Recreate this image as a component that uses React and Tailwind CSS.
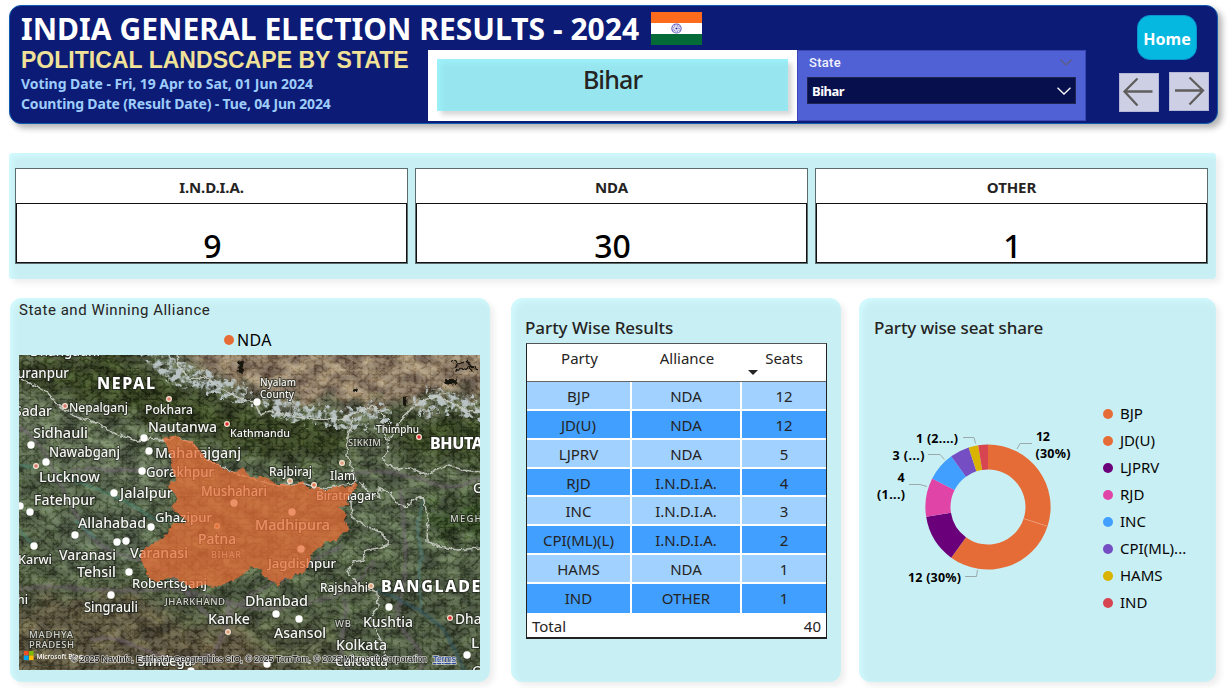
const panel =
  "bg-[#c8eff3] shadow-[inset_3px_3px_6px_#d2fbff,4px_4px_6px_rgba(0,0,0,0.07)]";

/* ---------- header ---------- */

function Flag() {
  return (
    <svg viewBox="0 0 50 33" preserveAspectRatio="none" className="h-[33px] w-[51px]">
      <rect width="50" height="11" fill="#ff6b1c" />
      <rect y="11" width="50" height="11" fill="#fff" />
      <rect y="22" width="50" height="11" fill="#046a38" />
      <circle cx="25" cy="16.5" r="4.6" fill="none" stroke="#5b55b8" strokeWidth="1" />
      <circle cx="25" cy="16.5" r="2.8" fill="none" stroke="#8f8bd0" strokeWidth="2" strokeDasharray="0.8 0.7" />
      <circle cx="25" cy="16.5" r="1.1" fill="#3a3499" />
    </svg>
  );
}

function NavButton({ d, className }) {
  return (
    <button
      className={`flex h-[39px] w-10 items-center justify-center border border-[#b3b6d6] bg-[#cdd0e5] ${className}`}
    >
      <svg viewBox="0 0 40 39" className="h-[39px] w-10 shrink-0" fill="none" stroke="#605e5c" strokeWidth="2.3">
        <path d={d} />
      </svg>
    </button>
  );
}

function Header() {
  return (
    <header className="ml-[9px] mt-[5px] flex h-[119px] w-[1209px] rounded-[12px] border border-[#0f5cae] bg-[#0c1b76] shadow-[4px_4px_6px_rgba(0,0,0,0.3)]">
      <div className="flex w-[1076px] flex-col">
        <div className="flex h-11 items-start pl-[11px]">
          <h1 className="mt-[1px] w-[621px] whitespace-nowrap text-[30px] font-bold leading-[44px] tracking-[0.03px] text-white">
            INDIA GENERAL ELECTION RESULTS - 2024
          </h1>
          <div className="ml-[9px] mt-[6px]">
            <Flag />
          </div>
        </div>
        <div className="flex h-[71px]">
          <div className="w-[418px] pl-[11px]">
            <h2 className="-mt-[4px] whitespace-nowrap font-['Liberation_Sans',sans-serif] text-[23px] font-bold leading-[28px] tracking-[0.03px] text-[#f0e199]">
              POLITICAL LANDSCAPE BY STATE
            </h2>
            <p className="whitespace-nowrap text-[14px] font-bold leading-[20px] tracking-[-0.06px] text-[#9dcdfb]">
              Voting Date - Fri, 19 Apr to Sat, 01 Jun 2024
            </p>
            <p className="whitespace-nowrap text-[14px] font-bold leading-[20px] tracking-[-0.16px] text-[#9dcdfb]">
              Counting Date (Result Date) - Tue, 04 Jun 2024
            </p>
          </div>
          <div className="w-[369px] bg-white pl-[9px] pt-[9px]">
            <div className="h-[52px] w-[351px] bg-[#97e5ef] text-center text-[25px] font-medium leading-[41px] tracking-[-0.9px] text-[#252423] shadow-[inset_3px_3px_6px_#9df3fb,4px_4px_5px_rgba(0,0,0,0.16)]">
              Bihar
            </div>
          </div>
          <div className="w-[289px] border border-[#3a47b4] bg-[#4f61d5] px-[9px] text-white">
            <div className="flex h-[26px] items-center justify-between pl-[2px] pr-[3px] font-['Roboto',sans-serif] text-[13px] font-medium tracking-[0.3px] text-[#f1f2fc]">
              <span className="-mt-[2px]">State</span>
              <svg viewBox="0 0 12 7" className="-mt-[3px] mr-px h-[7px] w-3" fill="none" stroke="#605e7c" strokeWidth="1.2">
                <path d="M0.5 0.7 L6 6 L11.5 0.7" />
              </svg>
            </div>
            <div className="flex h-[27px] items-center justify-between border border-[#20264f] bg-[#080f4d] pl-1 pr-1">
              <span className="pt-[3px] text-[13px] font-bold tracking-[-0.5px]">Bihar</span>
              <svg viewBox="0 0 14 8" className="h-2 w-[14px]" fill="none" stroke="#fff" strokeWidth="1.3">
                <path d="M0.5 0.8 L7 7 L13.5 0.8" />
              </svg>
            </div>
          </div>
        </div>
      </div>
      <div className="flex flex-1 flex-col">
        <button className="ml-[51px] mt-[9px] h-[45px] w-[60px] rounded-[13px] border border-[#0a93cf] bg-[#05b8e0] pt-[3px] text-[16px] font-bold leading-[40px] text-white">
          Home
        </button>
        <div className="ml-[33px] mt-[12px] flex gap-[10px]">
          <NavButton className="mt-px" d="M5.5 18.5 H33.5 M18.5 5.5 L5.5 18.5 L18.5 32.5" />
          <NavButton className="" d="M6 18.5 H34 M20.5 5.5 L34 18.5 L20.5 32.5" />
        </div>
      </div>
    </header>
  );
}

/* ---------- alliance totals ---------- */

function Total({ name, seats }) {
  return (
    <div className="flex h-24 w-[393px] flex-col border border-[#5c6b6e] bg-white text-center">
      <div className="h-[34px] text-[15px] font-bold leading-[36px] tracking-[-0.1px] text-[#252423]">{name}</div>
      <div className="h-[60px] border border-[#111] pl-[2px] pt-[21px] text-[32px] font-medium leading-[42px] text-black">
        {seats}
      </div>
    </div>
  );
}

/* ---------- map ---------- */

const cityLabels = [
  ["uranpur", 17, 378, 52, 13.5],
  ["Nepalganj", 69, 412, 59, 12.5],
  ["Pokhara", 145, 414, 48, 12.5],
  ["Sadar", 14, 416, 38, 13.5],
  ["Nautanwa", 148, 432, 69, 14],
  ["Kathmandu", 230, 437, 60, 11.5],
  ["Sidhauli", 33, 438, 55, 14],
  ["Nawabganj", 49, 457, 71, 14],
  ["Maharajganj", 155, 458, 86, 14],
  ["Gorakhpur", 146, 477, 68, 14],
  ["Lucknow", 39, 482, 61, 14],
  ["Jalalpur", 120, 498, 53, 14],
  ["Fatehpur", 34, 505, 61, 14],
  ["Mushahari", 201, 496, 66, 14],
  ["Ghazipur", 155, 522, 57, 13],
  ["Allahabad", 78, 528, 68, 14],
  ["Patna", 198, 544, 38, 14],
  ["Varanasi", 59, 560, 57, 14],
  ["Varanasi", 130, 558, 58, 14],
  ["Karwi", 18, 564, 34, 13],
  ["Tehsil", 77, 577, 39, 14],
  ["Robertsganj", 132, 588, 75, 13],
  ["Singrauli", 84, 612, 54, 13.5],
  ["hi", 17, 604, 11, 13],
  ["Kanke", 208, 624, 42, 14],
  ["Dhanbad", 245, 606, 63, 14],
  ["Asansol", 274, 638, 52, 14],
  ["Kolkata", 336, 650, 51, 14],
  ["Calcutta", 335, 666, 53, 14],
  ["Simdega", 138, 666, 54, 14],
  ["Kushtia", 363, 627, 50, 13.5],
  ["Dhaka", 455, 624, 42, 14.5],
  ["La", 471, 648, 17, 13.5],
  ["C", 472, 676, 9, 13.5],
  ["G", 473, 493, 10, 13.5],
  ["Jagdishpur", 268, 568, 68, 13],
  ["Madhipura", 255, 530, 75, 14],
  ["Rajshahi", 320, 592, 48, 12.5],
  ["Biratnagar", 316, 500, 60, 12],
  ["Rajbiraj", 269, 476, 43, 12.5],
  ["Ilam", 330, 480, 25, 12.5],
  ["Thimphu", 376, 433, 43, 11.5],
  ["Nyalam", 260, 386, 36, 10.5],
  ["County", 260, 398, 34, 10.5],
  ["Dhangadhi", 30, 356, 70, 13.5],
];

const countryLabels = [
  ["NEPAL", 97, 389, 58],
  ["BHUTAN", 430, 449, 66],
  ["BANGLADESH", 381, 592, 124],
];

const regionLabels = [
  ["SIKKIM", 348, 446, 33, 9.5],
  ["BIHAR", 211, 558, 30, 9],
  ["JHARKHAND", 165, 605, 60, 9.5],
  ["MADHYA", 29, 638, 44, 9.5],
  ["PRADESH", 29, 648, 45, 9.5],
  ["WB", 335, 627, 16, 9.5],
  ["MEGHALAYA", 450, 522, 66, 9.5],
];

const whiteDots = [
  [144, 438], [149, 451], [142, 471], [114, 493], [31, 445], [46, 462], [30, 512],
  [20, 506], [75, 535], [117, 542], [126, 541], [151, 527], [34, 546], [129, 572],
  [111, 595], [234, 503], [292, 512], [301, 549], [276, 614], [299, 619],
  [389, 607], [257, 402], [467, 655], [267, 664], [191, 671],
];

const ringDots = [
  [65, 406, "#d8786c"], [169, 399, "#e08573"], [227, 424, "#dc2f2f"], [36, 466, "#d8786c"],
  [419, 437, "#dc2f2f"], [342, 463, "#dba07a"], [290, 481, "#dba07a"], [314, 485, "#e07850"],
  [371, 586, "#dba07a"], [450, 618, "#dc2f2f"], [228, 632, "#dba07a"], [217, 526, "#dc7a3a"],
];

const BIHAR =
  "M163 439 175 435 183 440 192 441 198 448 205 458 217 463 224 470 237 472 243 467 250 477 265 477 278 485 290 485 303 481 307 488 320 488 326 491 337 486 350 487 355 481 357 488 351 492 347 500 350 506 338 507 347 514 344 520 349 531 341 534 337 541 327 541 320 547 313 552 310 562 305 572 296 574 290 578 282 580 278 587 272 581 265 577 260 570 250 567 244 574 237 578 225 584 213 587 203 584 193 589 183 582 170 577 158 582 150 580 146 572 143 565 140 556 144 549 158 541 167 535 173 524 187 522 182 517 177 513 171 507 177 500 173 492 167 486 177 478 172 470 171 455Z";

function MapView() {
  return (
    <svg viewBox="19 355 461 315" className="isolate block h-[315px] w-[461px]">
      <defs>
        <filter id="soft" x="-20%" y="-20%" width="140%" height="140%">
          <feGaussianBlur stdDeviation="7" result="b" />
          <feTurbulence type="fractalNoise" baseFrequency="0.05" numOctaves="4" seed="11" result="n" />
          <feDisplacementMap in="b" in2="n" scale="36" />
        </filter>
        <filter id="haze" x="-20%" y="-20%" width="140%" height="140%">
          <feGaussianBlur stdDeviation="1.1" result="b" />
          <feTurbulence type="fractalNoise" baseFrequency="0.15" numOctaves="3" seed="2" result="n" />
          <feDisplacementMap in="b" in2="n" scale="6" />
        </filter>
        <filter id="terrain" x="0" y="0" width="100%" height="100%" colorInterpolationFilters="sRGB">
          <feTurbulence type="fractalNoise" baseFrequency="0.05 0.08" numOctaves="6" seed="8" />
          <feColorMatrix values="1.6 1.2 0 0 -0.95  1.6 1.2 0 0 -0.95  1.5 1.1 0 0 -0.88  0 0 0 0 0.34" />
        </filter>
        <filter id="ridges" x="0" y="0" width="100%" height="100%" colorInterpolationFilters="sRGB">
          <feTurbulence type="turbulence" baseFrequency="0.13 0.16" numOctaves="4" seed="21" />
          <feColorMatrix values="2.2 1.3 0 0 -0.32  2.2 1.3 0 0 -0.34  2.2 1.3 0 0 -0.36  0 0 0 0 0.4" />
        </filter>
        <filter id="snowfall" x="-10%" y="-10%" width="120%" height="120%" colorInterpolationFilters="sRGB">
          <feTurbulence type="fractalNoise" baseFrequency="0.16" numOctaves="4" seed="3" result="n" />
          <feDisplacementMap in="SourceGraphic" in2="n" scale="26" result="d" />
          <feColorMatrix in="n" values="0 0 0 0 0.72  0 0 0 0 0.76  0 0 0 0 0.76  3.4 3 0 0 -2.75" result="m" />
          <feComposite in="m" in2="d" operator="in" />
          <feGaussianBlur stdDeviation="0.5" />
        </filter>
        <filter id="rough" x="-5%" y="-5%" width="110%" height="110%">
          <feTurbulence type="fractalNoise" baseFrequency="0.22" numOctaves="2" seed="5" result="n" />
          <feDisplacementMap in="SourceGraphic" in2="n" scale="5" xChannelSelector="R" yChannelSelector="G" />
        </filter>
        <linearGradient id="land" x1="0.55" y1="0" x2="0.35" y2="1">
          <stop offset="0" stopColor="#49523a" />
          <stop offset="0.45" stopColor="#4a5a41" />
          <stop offset="0.75" stopColor="#46543a" />
          <stop offset="1" stopColor="#4b4c35" />
        </linearGradient>
      </defs>

      <rect x="19" y="355" width="461" height="315" fill="url(#land)" />
      <g filter="url(#soft)">
        <path d="M165 335 510 335 510 402 450 392 410 402 350 402 290 402 245 388 200 368Z" fill="#877560" />
        <path d="M10 360 120 352 180 385 250 408 345 425 345 458 250 458 160 425 90 405 10 375Z" fill="#2e3b1e" />
        <path d="M385 422 490 418 490 462 410 458Z" fill="#2e3c1e" />
        <path d="M10 395 100 430 160 450 170 500 90 480 10 440Z" fill="#54634b" />
        <path d="M430 502 490 502 490 540 435 535Z" fill="#2c421d" />
        <path d="M10 605 140 595 200 640 120 680 10 680Z" fill="#534d38" />
        <path d="M150 645 240 625 280 680 150 680Z" fill="#514a34" />
        <path d="M350 560 490 600 490 680 340 680Z" fill="#425038" />
        <path d="M60 505 150 500 150 560 60 570Z" fill="#4b5a45" />
      </g>
      <rect x="19" y="355" width="461" height="315" filter="url(#terrain)" className="mix-blend-overlay" />
      <rect x="19" y="355" width="461" height="315" filter="url(#ridges)" className="mix-blend-soft-light" />
      <g filter="url(#haze)" fill="none" stroke="#77677b" strokeOpacity="0.55" strokeWidth="3">
        <path d="M19 428 C50 440 60 500 90 535 S150 545 185 590 S220 620 245 600 S290 580 340 545" />
        <path d="M70 470 C110 468 140 472 172 470" />
        <path d="M19 590 C60 580 90 595 150 590 S240 620 300 605 S350 590 375 560" />
        <path d="M350 475 C380 465 420 478 440 485 S470 480 482 478" />
        <path d="M345 600 C350 630 330 650 350 670 M400 490 C405 540 410 560 400 600 S430 640 420 670" />
        <path d="M90 640 C120 630 140 655 180 660 S230 630 228 600" />
      </g>
      <g filter="url(#haze)" fill="none" stroke="#4a8f7c" strokeOpacity="0.8" strokeWidth="1.8">
        <path d="M19 465 36 468 M60 475 C100 490 125 500 140 510 S155 520 170 520" />
        <path d="M19 530 34 546 M75 520 95 538" />
      </g>
      <g filter="url(#haze)" fill="none" stroke="#547e7c" strokeOpacity="0.8" strokeWidth="2.4">
        <path d="M423 500 417 525 421 557 418 580 422 610" />
        <path d="M377 590 400 600 422 612 443 628 455 650 465 672" stroke="#2f5560" />
      </g>

      <g filter="url(#snowfall)">
        <path d="M140 355 165 352 190 366 225 378 250 388 248 402 215 396 185 388 165 380Z" fill="#fff" />
        <path d="M262 402 275 396 300 402 345 412 385 404 392 418 350 430 310 422 275 420Z" fill="#fff" />
        <path d="M412 402 440 388 480 400 480 420 445 408 420 418Z" fill="#fff" />
      </g>
      <g fill="#15130f" filter="url(#rough)">
        <path d="M237 362 243 361 242 366 244 374 237 372 240 368Z M444 379 457 379 456 385 446 383Z M403 397 407 396 406 407 403 405Z M353 388 358 389 357 392 352 391Z" />
        <path d="M452 360 458 364 464 362 M458 364 456 370 463 370 470 366 478 370 M466 360 470 366 472 372" fill="none" stroke="#15130f" strokeWidth="1.3" />
      </g>

      <g fill="none" stroke="#c9ccc4" strokeWidth="1.5" strokeLinejoin="round" strokeOpacity="0.9" filter="url(#rough)">
        <path d="M21 379 47 392 60 407 77 417 100 424 113 433 137 441 150 438 163 441 175 437 192 443 205 459 237 474 250 478 278 486 303 483 320 489 355 483" />
        <path d="M177 355 179 366 190 380 205 377 223 390 243 400 255 402 260 415 270 411 290 416 310 419 340 420 353 414 373 406 384 416 384 432 387 440 388 452 383 458 385 464 397 469 410 468 427 475 437 469 450 465 462 470 480 472" />
        <path d="M388 442 400 422 410 410 424 400 437 396 450 402 466 410 480 412" />
        <path d="M353 418 348 435 347 455 353 470 356 482 350 490 352 517 367 527 380 532 390 544 378 548 366 550 363 560 353 562 347 572 360 586 377 592 378 607 371 617 378 634 383 645 387 672" />
        <path d="M360 482 368 492 380 498 378 488 390 493 397 504 407 507 412 500 423 497 428 518 427 542 440 546 457 550 480 548" />
      </g>

      <g className="font-['Noto_Sans',sans-serif]" fill="#f4f5f2" stroke="#20241c" strokeOpacity="0.7" strokeWidth="2">
        {regionLabels.map(([t, x, y, w, s]) => (
          <text key={t} x={x} y={y} textLength={w} fontSize={s} fontWeight="500" fill="#d2d3cd" paintOrder="stroke">
            {t}
          </text>
        ))}
        {cityLabels.map(([t, x, y, w, s]) => (
          <text key={t + x} x={x} y={y} textLength={w} lengthAdjust="spacingAndGlyphs" fontSize={s} fontWeight="500" paintOrder="stroke">
            {t}
          </text>
        ))}
        {countryLabels.map(([t, x, y, w]) => (
          <text key={t} x={x} y={y} textLength={w} fontSize="16" fontWeight="800" fill="#fff" paintOrder="stroke">
            {t}
          </text>
        ))}
      </g>
      {whiteDots.map(([x, y]) => (
        <circle key={`${x}-${y}`} cx={x} cy={y} r="3.7" fill="#fff" />
      ))}
      {ringDots.map(([x, y, c]) => (
        <circle key={`${x}-${y}`} cx={x} cy={y} r="2.4" fill={c} stroke="#f6e3d2" strokeWidth="1.2" />
      ))}

      <path d={BIHAR} fill="#e66c37" fillOpacity="0.75" filter="url(#rough)" />

      <g>
        <rect x="24" y="651" width="4.6" height="4.6" fill="#f25022" />
        <rect x="29" y="651" width="4.6" height="4.6" fill="#7fba00" />
        <rect x="24" y="655.5" width="4.6" height="4.6" fill="#00a4ef" />
        <rect x="29" y="655.5" width="4.6" height="4.6" fill="#ffb900" />
        <text x="36.5" y="658.5" textLength="46" lengthAdjust="spacingAndGlyphs" fontSize="7.5" fontWeight="500" fill="#fff" className="font-['Noto_Sans',sans-serif]">
          Microsoft Bing
        </text>
      </g>
      <g className="font-['Liberation_Sans',sans-serif]" fontSize="9" fill="#000" stroke="#f0f0f0" strokeWidth="1.5" strokeOpacity="0.75">
        <text x="71" y="662" textLength="356" paintOrder="stroke">
          © 2025 NavInfo, Earthstar Geographics SIO, © 2025 TomTom, © 2025 Microsoft Corporation
        </text>
        <text x="433" y="662" textLength="23" fill="#1b3c9c" textDecoration="underline" paintOrder="stroke">
          Terms
        </text>
      </g>
    </svg>
  );
}

function MapPanel() {
  return (
    <section className={`flex h-[384px] w-[480px] flex-col rounded-[12px] pl-[9px] ${panel}`}>
      <h3 className="mt-[3px] h-[18px] font-['Roboto',sans-serif] text-[15px] leading-[18px] tracking-[0.52px] text-[#252423]">
        State and Winning Alliance
      </h3>
      <div className="mt-[7px] flex h-[29px] items-start gap-[3px] pl-[205px]">
        <span className="mt-[9px] h-[10px] w-[10px] rounded-full bg-[#e66c37]" />
        <span className="text-[16px] leading-[28px] tracking-[0.4px] text-black">NDA</span>
      </div>
      <MapView />
    </section>
  );
}

/* ---------- party table ---------- */

const results = [
  ["BJP", "NDA", 12],
  ["JD(U)", "NDA", 12],
  ["LJPRV", "NDA", 5],
  ["RJD", "I.N.D.I.A.", 4],
  ["INC", "I.N.D.I.A.", 3],
  ["CPI(ML)(L)", "I.N.D.I.A.", 2],
  ["HAMS", "NDA", 1],
  ["IND", "OTHER", 1],
];

function TablePanel() {
  return (
    <section className={`h-[384px] w-[330px] rounded-[12px] pl-[14px] pt-[17px] ${panel}`}>
      <h3 className="h-[28px] whitespace-nowrap text-[17px] font-medium leading-[26px] tracking-[-0.05px] text-[#252423]">
        Party Wise Results
      </h3>
      <div className="ml-px flex h-[296px] w-[301px] flex-col border border-b-2 border-[#222] border-t-[#555] bg-white text-[15px] text-[#252423]">
        <div className="grid h-[38px] shrink-0 grid-cols-[105px_110px_84px] border-b border-[#666] text-center leading-[29px]">
          <span>Party</span>
          <span>Alliance</span>
          <span className="relative">
            Seats
            <svg viewBox="0 0 10 5" className="absolute left-[6px] top-[26px] h-[5px] w-[10px]">
              <path d="M0 0H10L5 5Z" fill="#252423" />
            </svg>
          </span>
        </div>
        {results.map(([party, alliance, seats], i) => (
          <div
            key={party}
            className={`grid h-[28.85px] shrink-0 grid-cols-[105px_110px_84px] text-center leading-[29px] ${
              i % 2 ? "bg-[#419fff]" : "bg-[#a0d1ff]"
            } ${i < 7 ? "border-b-2 border-white" : ""}`}
          >
            <span className="border-r-2 border-white">{party}</span>
            <span className="border-r-2 border-white">{alliance}</span>
            <span>{seats}</span>
          </div>
        ))}
        <div className="flex h-6 shrink-0 justify-between pl-[5px] pr-[5px] leading-[26px]">
          <span>Total</span>
          <span>40</span>
        </div>
      </div>
    </section>
  );
}

/* ---------- donut ---------- */

const shares = [
  ["BJP", 12, "#e66c37"],
  ["JD(U)", 12, "#e66c37"],
  ["LJPRV", 5, "#6b007b"],
  ["RJD", 4, "#e044a7"],
  ["INC", 3, "#419fff"],
  ["CPI(ML)...", 2, "#744ec2"],
  ["HAMS", 1, "#d9b300"],
  ["IND", 1, "#d64550"],
];

function point(r, seats) {
  const a = (seats / 40) * Math.PI * 2;
  return `${(988 + r * Math.sin(a)).toFixed(2)} ${(507 - r * Math.cos(a)).toFixed(2)}`;
}

function Donut() {
  let from = 0;
  const arcs = shares.map(([name, n, color]) => {
    const a = from;
    const b = from + n;
    from = b;
    return (
      <path
        key={name}
        d={`M${point(62.6, a)}A62.6 62.6 0 0 1 ${point(62.6, b)}L${point(37.5, b)}A37.5 37.5 0 0 0 ${point(37.5, a)}Z`}
        fill={color}
      />
    );
  });
  return (
    <svg viewBox="870 420 215 170" className="h-[170px] w-[215px]">
      {arcs}
      <path d={`M${point(37.5, 12)}L${point(62.6, 12)}`} stroke="#f0a27f" strokeWidth="0.7" />
      <g fill="none" stroke="#9aa9ab" strokeWidth="1">
        <path d="M1017 449 1020 443.5H1032" />
        <path d="M977.5 570 976.5 576.5H965" />
        <path d="M909 484.5H920L927 486.5" />
        <path d="M928 454.5H940L944.5 459.5" />
        <path d="M963 437.5H974L975.5 443.5" />
      </g>
      <g className="font-['Noto_Sans',sans-serif]" fontSize="12.5" fontWeight="700" fill="#000">
        <text x="1036" y="441" textLength="14">12</text>
        <text x="1035.5" y="458" textLength="35">(30%)</text>
        <text x="908" y="582" textLength="53">12 (30%)</text>
        <text x="897.5" y="482">4</text>
        <text x="877" y="499" textLength="28">(1...)</text>
        <text x="892.5" y="460" textLength="32">3 (...)</text>
        <text x="916" y="443" textLength="42">1 (2....)</text>
      </g>
    </svg>
  );
}

const legendDots = [
  "bg-[#e66c37]",
  "bg-[#e66c37]",
  "bg-[#6b007b]",
  "bg-[#e044a7]",
  "bg-[#419fff]",
  "bg-[#744ec2]",
  "bg-[#d9b300]",
  "bg-[#d64550]",
];

function SharePanel() {
  return (
    <section className={`h-[384px] w-[357px] rounded-[12px] ${panel}`}>
      <h3 className="pl-[15px] pt-[17px] text-[17px] font-medium leading-[26px] tracking-[-0.13px] text-[#252423]">
        Party wise seat share
      </h3>
      <div className="flex pl-[11px] pt-[59px]">
        <div className="pt-[20px]">
          <Donut />
        </div>
        <ul className="ml-[18px]">
          {shares.map(([name], i) => (
            <li key={name} className="flex h-[27px] items-center gap-[7px] text-[15px] leading-[27px] text-[#050505]">
              <span className={`h-[10px] w-[10px] rounded-full ${legendDots[i]}`} />
              {name}
            </li>
          ))}
        </ul>
      </div>
    </section>
  );
}

export default function App() {
  return (
    <div className="flex h-[688px] w-[1228px] flex-col overflow-hidden bg-white font-['Noto_Sans',sans-serif]">
      <Header />
      <section className={`ml-[9px] mt-[29px] flex h-[126px] w-[1207px] gap-[7px] rounded-[4px] pl-[6px] pt-[15px] ${panel}`}>
        <Total name="I.N.D.I.A." seats="9" />
        <Total name="NDA" seats="30" />
        <Total name="OTHER" seats="1" />
      </section>
      <main className="ml-[10px] mt-[19px] flex">
        <MapPanel />
        <div className="ml-[21px]">
          <TablePanel />
        </div>
        <div className="ml-[18px]">
          <SharePanel />
        </div>
      </main>
    </div>
  );
}
